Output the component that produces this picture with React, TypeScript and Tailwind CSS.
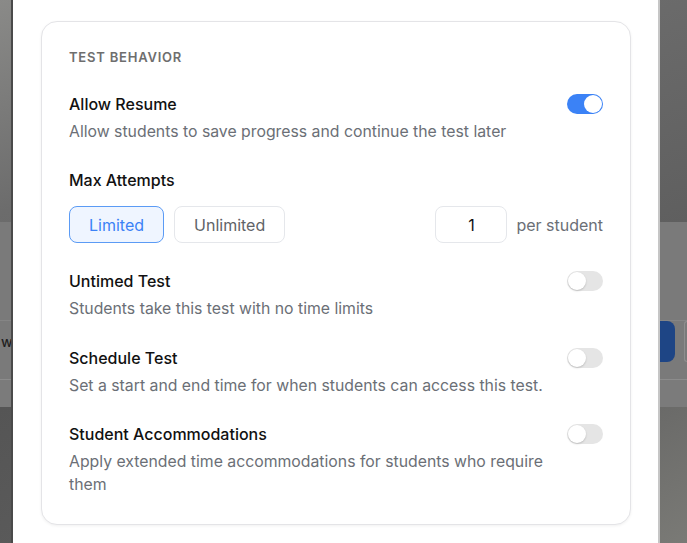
import { useState } from 'react';

type Setting = {
    key: string;
    title: string;
    description: string;
    enabled: boolean;
    gap: string;
};

const topSettings: Setting[] = [
    {
        key: 'resume',
        title: 'Allow Resume',
        description: 'Allow students to save progress and continue the test later',
        enabled: true,
        gap: 'mt-0',
    },
];

const bottomSettings: Setting[] = [
    {
        key: 'untimed',
        title: 'Untimed Test',
        description: 'Students take this test with no time limits',
        enabled: false,
        gap: 'mt-[27px]',
    },
    {
        key: 'schedule',
        title: 'Schedule Test',
        description: 'Set a start and end time for when students can access this test.',
        enabled: false,
        gap: 'mt-[27px]',
    },
    {
        key: 'accommodations',
        title: 'Student Accommodations',
        description: 'Apply extended time accommodations for students who require them',
        enabled: false,
        gap: 'mt-[26px]',
    },
];

const Toggle = ({ on }: { on: boolean }) => (
    <span
        className={`mt-px flex h-5 w-9 shrink-0 items-center rounded-full p-px ${
            on ? 'justify-end bg-[#3b82f6]' : 'justify-start bg-[#e5e5e5]'
        }`}
    >
        <span
            className={`h-[18px] w-[18px] rounded-full bg-white ${
                on ? '' : 'shadow-[0_1px_2px_rgba(0,0,0,0.18)]'
            }`}
        />
    </span>
);

const SettingRow = ({ s }: { s: Setting }) => (
    <div className="flex items-start justify-between gap-4">
        <div className="min-w-0 flex-1">
            <div className="text-[16px] leading-[22px] font-medium text-[#111]">{s.title}</div>
            <p className="mt-[5px] text-[15.8px] leading-[23px] text-[#6b6f76]">{s.description}</p>
        </div>
        <Toggle on={s.enabled} />
    </div>
);

export default function App() {
    const [mode, setMode] = useState<'limited' | 'unlimited'>('limited');

    const modeBtn = (active: boolean) =>
        `h-[37px] rounded-lg border px-[19px] text-[16px] ${
            active
                ? 'border-[#5b9bf5] bg-[#eff5ff] text-[#3b82f6]'
                : 'border-[#e5e7eb] bg-white text-[#5f6368]'
        }`;

    return (
        <div
            className="relative h-[543px] w-[687px] overflow-hidden bg-[#666]"
            style={{ fontFamily: 'Inter, "Noto Sans", sans-serif' }}
        >
            {/* Dimmed page behind the dialog */}
            <div className="flex h-full flex-col">
                <div className="h-[222px] bg-[linear-gradient(160deg,#8a8a88_0%,#6c6c6c_45%,#5f5f5f_100%)]" />
                <div className="flex h-[158px] flex-col border-b border-[#8c8c8c] bg-[#7a7a7a]">
                    <div className="mt-[98px] flex h-[41px] items-center justify-between border-t border-[#858585]">
                        <span className="pl-px text-[14px] font-medium text-[#1f1f1f]">w</span>
                        <div className="flex items-center gap-[9px]">
                            <span className="h-[41px] w-[40px] rounded-lg bg-[#1e4585]" />
                            <span className="h-[41px] w-[3px] rounded-l-md border border-r-0 border-[#8e8e8e]" />
                        </div>
                    </div>
                </div>
                <div className="h-[27px] bg-[#7b7b7b]" />
                <div className="flex-1 bg-[linear-gradient(150deg,#555_0%,#5e5e5e_50%,#7a7a76_100%)]" />
            </div>

            {/* Dialog */}
            <div className="absolute inset-y-0 left-[11px] w-[649px] border-r-2 border-l-2 border-r-[#c6c6c6] border-l-[#4a4a4a] bg-white pt-[21px] pr-[27px] pl-[28px]">
                <section className="rounded-2xl border border-[#e4e4e7] bg-white px-[27px] pt-[25px] pb-[28px] shadow-[0_1px_3px_rgba(0,0,0,0.06)]">
                    <h3 className="text-[13px] leading-5 font-semibold tracking-[0.06em] text-[#6e6e6e] uppercase">
                        Test Behavior
                    </h3>

                    <div className="mt-[26px] flex flex-col">
                        {topSettings.map((s) => (
                            <SettingRow key={s.key} s={s} />
                        ))}

                        <div className="mt-[26px]">
                            <div className="text-[16px] leading-[22px] font-medium text-[#111]">Max Attempts</div>
                            <div className="mt-[15px] flex items-center">
                                <div className="flex gap-[10px]">
                                    <button onClick={() => setMode('limited')} className={modeBtn(mode === 'limited')}>
                                        Limited
                                    </button>
                                    <button onClick={() => setMode('unlimited')} className={modeBtn(mode === 'unlimited')}>
                                        Unlimited
                                    </button>
                                </div>
                                <div className="ml-auto flex items-center gap-[9px]">
                                    <input
                                        defaultValue="1"
                                        className="h-[37px] w-[72px] rounded-lg border border-[#e5e7eb] text-center text-[16px] text-[#111] outline-none"
                                    />
                                    <span className="text-[16px] text-[#6b6f76]">per student</span>
                                </div>
                            </div>
                        </div>

                        {bottomSettings.map((s) => (
                            <div key={s.key} className={s.gap}>
                                <SettingRow s={s} />
                            </div>
                        ))}
                    </div>
                </section>
            </div>
        </div>
    );
}
